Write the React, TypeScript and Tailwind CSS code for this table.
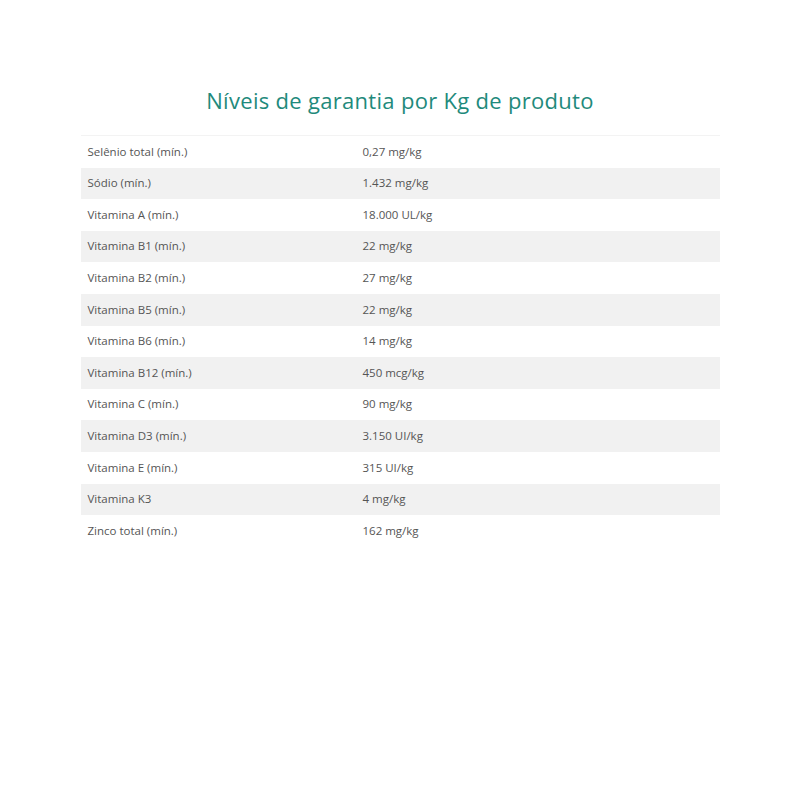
import React from "react";

const rows: Array<[string, string]> = [
  ["Selênio total (mín.)", "0,27 mg/kg"],
  ["Sódio (mín.)", "1.432 mg/kg"],
  ["Vitamina A (mín.)", "18.000 UL/kg"],
  ["Vitamina B1 (mín.)", "22 mg/kg"],
  ["Vitamina B2 (mín.)", "27 mg/kg"],
  ["Vitamina B5 (mín.)", "22 mg/kg"],
  ["Vitamina B6 (mín.)", "14 mg/kg"],
  ["Vitamina B12 (mín.)", "450 mcg/kg"],
  ["Vitamina C (mín.)", "90 mg/kg"],
  ["Vitamina D3 (mín.)", "3.150 UI/kg"],
  ["Vitamina E (mín.)", "315 UI/kg"],
  ["Vitamina K3", "4 mg/kg"],
  ["Zinco total (mín.)", "162 mg/kg"],
];

export default function App() {
  return (
    <div className="min-h-[800px] bg-white font-['Open_Sans',sans-serif]">
      <div className="mx-auto w-[639px] pt-[84px]">
        <h2 className="text-center text-[22px] leading-[32px] font-medium tracking-[0.3px] text-[#1f8a7c]">
          Níveis de garantia por Kg de produto
        </h2>
        <div className="mt-[19px] border-t border-[#f3f3f3]">
          {rows.map(([label, value], i) => {
            return (
              <div
                key={label}
                className={`flex h-[31.6px] items-center pb-px text-[11.5px] text-[#555] ${
                  i % 2 === 1 ? "bg-[#f1f1f1]" : ""
                }`}
              >
                <span className="w-[282px] pl-[7px]">{label}</span>
                <span>{value}</span>
              </div>
            );
          })}
        </div>
      </div>
    </div>
  );
}
